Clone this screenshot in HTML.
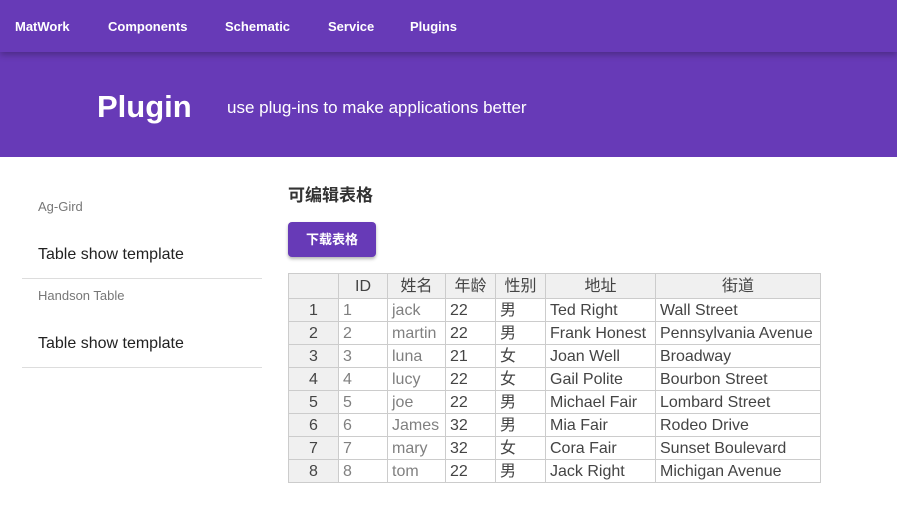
<!DOCTYPE html>
<html><head><meta charset="utf-8"><style>
*{margin:0;padding:0;box-sizing:border-box}
body{width:897px;height:510px;overflow:hidden;background:#fff;font-family:"Liberation Sans","Noto Sans CJK SC",sans-serif;position:relative}
.nav{position:absolute;left:0;top:0;width:897px;height:52px;background:#673ab7;box-shadow:0 3px 6px rgba(0,0,0,.25);z-index:2}
.nav span{position:absolute;top:19px;color:#fff;font-weight:bold;font-size:13px}
.hero{position:absolute;left:0;top:52px;width:897px;height:105px;background:#673ab7}
.hero h1{position:absolute;left:97px;top:37px;color:#fff;font-size:31px;font-weight:bold}
.hero p{position:absolute;left:227px;top:46px;color:#fff;font-size:17px}
.cap{position:absolute;left:38px;font-size:13px;color:#777}
.item{position:absolute;left:38px;font-size:16px;color:#222}
.line{position:absolute;left:22px;width:240px;height:1px;background:#ddd}
h2{position:absolute;left:288px;top:181px;font-size:17px;color:#333;font-weight:bold}
.btn{position:absolute;left:288px;top:222px;width:88px;height:35px;background:#673ab7;color:#fff;font-size:13px;font-weight:bold;border-radius:4px;box-shadow:0 2px 3px rgba(0,0,0,.3);text-align:center;line-height:35px}
table{position:absolute;left:288px;top:273px;border-collapse:collapse;font-size:16px;color:#444}
td{border:1px solid #ccc;height:23px;padding:1px 4px 0;white-space:nowrap;line-height:21px}
tr:first-child td{height:25px;background:#f0f0f0;text-align:center}
td:first-child{background:#f0f0f0;text-align:center}
.g{color:#808080}
</style></head><body>
<div class="nav"><span style="left:15px">MatWork</span><span style="left:108px">Components</span><span style="left:225px">Schematic</span><span style="left:328px">Service</span><span style="left:410px">Plugins</span></div>
<div class="hero"><h1>Plugin</h1><p>use plug-ins to make applications better</p></div>
<div class="cap" style="top:199px">Ag-Gird</div>
<div class="item" style="top:246px">Table show template</div>
<div class="line" style="top:278px"></div>
<div class="cap" style="top:288px">Handson Table</div>
<div class="item" style="top:335px">Table show template</div>
<div class="line" style="top:367px"></div>
<h2>可编辑表格</h2>
<div class="btn">下载表格</div>
<table>
<tr><td style="width:50px"></td><td style="width:49px">ID</td><td style="width:58px">姓名</td><td style="width:50px">年龄</td><td style="width:50px">性别</td><td style="width:110px">地址</td><td style="width:165px">街道</td></tr>
<tr><td>1</td><td class="g">1</td><td class="g">jack</td><td>22</td><td>男</td><td>Ted Right</td><td>Wall Street</td></tr>
<tr><td>2</td><td class="g">2</td><td class="g">martin</td><td>22</td><td>男</td><td>Frank Honest</td><td>Pennsylvania Avenue</td></tr>
<tr><td>3</td><td class="g">3</td><td class="g">luna</td><td>21</td><td>女</td><td>Joan Well</td><td>Broadway</td></tr>
<tr><td>4</td><td class="g">4</td><td class="g">lucy</td><td>22</td><td>女</td><td>Gail Polite</td><td>Bourbon Street</td></tr>
<tr><td>5</td><td class="g">5</td><td class="g">joe</td><td>22</td><td>男</td><td>Michael Fair</td><td>Lombard Street</td></tr>
<tr><td>6</td><td class="g">6</td><td class="g">James</td><td>32</td><td>男</td><td>Mia Fair</td><td>Rodeo Drive</td></tr>
<tr><td>7</td><td class="g">7</td><td class="g">mary</td><td>32</td><td>女</td><td>Cora Fair</td><td>Sunset Boulevard</td></tr>
<tr><td>8</td><td class="g">8</td><td class="g">tom</td><td>22</td><td>男</td><td>Jack Right</td><td>Michigan Avenue</td></tr>
</table>
</body></html>
